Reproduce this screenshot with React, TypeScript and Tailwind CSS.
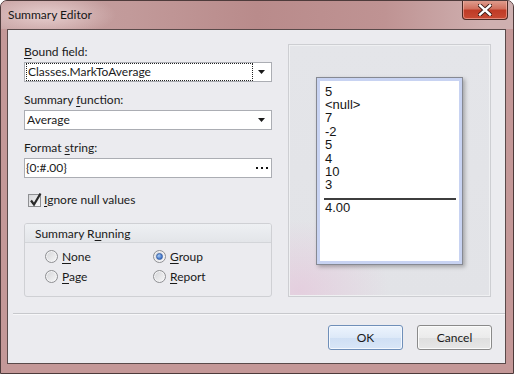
import React from "react";

const UI = "[font-family:Lato,'Open_Sans',sans-serif]";

function ComboArrow() {
  return (
    <svg width="7" height="4" viewBox="0 0 7 4" className="block">
      <path d="M0 0H7L3.5 4Z" fill="#1a1a1a" />
    </svg>
  );
}

function Radio({ checked }: { checked?: boolean }) {
  return (
    <div className="w-[13px] h-[13px] rounded-full border border-[#8e8f92] bg-[linear-gradient(135deg,#d4d5d8,#f7f7f8)] flex items-center justify-center shadow-[inset_0_0_0_1px_#f4f4f6]">
      {checked && (
        <div className="w-[7px] h-[7px] rounded-full bg-[radial-gradient(circle_at_35%_35%,#a9cbf3,#3e74c9_70%)] border border-[#3a62a8]" />
      )}
    </div>
  );
}

export default function App() {
  return (
    <div className={`w-[514px] h-[374px] bg-white ${UI}`}>
      <div className="w-[514px] h-[374px] flex flex-col rounded-t-[7px] border border-[#4e3b3b] bg-[#c49898] overflow-hidden">
        {/* title bar */}
        <div className="h-[28px] flex items-start shrink-0 bg-[radial-gradient(ellipse_70px_22px_at_45px_14px,rgba(236,214,214,0.85),transparent),linear-gradient(90deg,#c7a2a2_0%,#c29a9a_25%,#b98b8b_50%,#bf9393_75%,#cfb0b0_95%)]">
          <div className="pl-[7px] pt-[6px] text-[12px] leading-[16px] text-[#161616]">Summary Editor</div>
          <div className="ml-auto mr-[5px] -mt-[1px] w-[46px] h-[20px] rounded-b-[4px] border border-[#4b2a24] border-t-0 bg-[linear-gradient(180deg,#e0a293_0%,#d0715f_45%,#bf3b26_55%,#c84a33_100%)] shadow-[inset_0_0_0_1px_rgba(255,200,190,0.5)] flex items-center justify-center">
            <svg width="14" height="12" viewBox="0 0 14 12">
              <path d="M2 1.5L12 10.5M12 1.5L2 10.5" stroke="#3a1a14" strokeWidth="4.2" strokeLinecap="square" />
              <path d="M2 1.5L12 10.5M12 1.5L2 10.5" stroke="#ffffff" strokeWidth="2.4" strokeLinecap="square" />
            </svg>
          </div>
        </div>

        {/* client */}
        <div className="flex-1 pl-[6px] pr-[7px] pb-[9px] flex flex-col">
          <div className="flex-1 border border-[#5a4a4a] bg-[#ebebef] flex flex-col">
            <div className="flex pt-[14px] pl-[16px] pr-[14px] gap-[16px]">
              {/* left column */}
              <div className="w-[248px] flex flex-col text-[12px] text-[#1a1a1a]">
                <div className="h-[15px] leading-[15px] mb-[3px]">
                  <u className="underline-offset-2">B</u>ound field:
                </div>
                <div className="h-[20px] border border-[#abadb3] bg-white flex items-center">
                  <div className="ml-[1px] h-[18px] w-[229px] border border-dotted border-[#222] flex items-center pl-[1px] leading-[16px]">
                    Classes.MarkToAverage
                  </div>
                  <div className="ml-auto w-[17px] flex justify-center mr-[1px]">
                    <ComboArrow />
                  </div>
                </div>
                <div className="h-[15px] leading-[15px] mt-[10px] mb-[3px]">
                  Summary <u className="underline-offset-2">f</u>unction:
                </div>
                <div className="h-[20px] border border-[#abadb3] bg-white flex items-center">
                  <div className="pl-[2px] leading-[16px]">Average</div>
                  <div className="ml-auto w-[17px] flex justify-center mr-[1px]">
                    <ComboArrow />
                  </div>
                </div>
                <div className="h-[15px] leading-[15px] mt-[10px] mb-[3px]">
                  Format <u className="underline-offset-2">s</u>tring:
                </div>
                <div className="h-[20px] border border-[#abadb3] bg-white flex items-center">
                  <div className="pl-[1px] leading-[16px]">{"{0:#.00}"}</div>
                  <div className="ml-auto mr-[3px] w-[12px] flex justify-between items-center">
                    <span className="w-[2px] h-[2px] bg-[#111]" />
                    <span className="w-[2px] h-[2px] bg-[#111]" />
                    <span className="w-[2px] h-[2px] bg-[#111]" />
                  </div>
                </div>
                {/* checkbox */}
                <div className="mt-[14px] h-[16px] flex items-center pl-[4px]">
                  <div className="relative w-[13px] h-[13px] border border-[#8e8f92] bg-[linear-gradient(135deg,#d6d7da,#f8f8f9)]">
                    <svg className="absolute -left-[1px] -top-[3px]" width="15" height="15" viewBox="0 0 15 15">
                      <path d="M3 8.5L6 12.5L12.5 1.5" fill="none" stroke="#2a2a2a" strokeWidth="2.2" />
                    </svg>
                  </div>
                  <div className="ml-[3px] leading-[16px]">
                    <u className="underline-offset-2">I</u>gnore null values
                  </div>
                </div>
                {/* group */}
                <div className="mt-[15px] h-[74px] rounded-[3px] border border-[#cfd0d4] flex flex-col overflow-hidden">
                  <div className="h-[19px] bg-[linear-gradient(180deg,#eef0f3,#e3e5e9)] border-b border-[#d3d5d9] pl-[10px] flex items-center leading-[15px]">
                    Summary R<u className="underline-offset-2">u</u>nning
                  </div>
                  <div className="grid grid-cols-[108px_1fr] gap-y-[7px] pl-[20px] pt-[7px]">
                    <div className="flex items-center gap-[4px] h-[13px]">
                      <Radio />
                      <span className="leading-[15px]"><u className="underline-offset-2">N</u>one</span>
                    </div>
                    <div className="flex items-center gap-[4px] h-[13px]">
                      <Radio checked />
                      <span className="leading-[15px]"><u className="underline-offset-2">G</u>roup</span>
                    </div>
                    <div className="flex items-center gap-[4px] h-[13px]">
                      <Radio />
                      <span className="leading-[15px]"><u className="underline-offset-2">P</u>age</span>
                    </div>
                    <div className="flex items-center gap-[4px] h-[13px]">
                      <Radio />
                      <span className="leading-[15px]"><u className="underline-offset-2">R</u>eport</span>
                    </div>
                  </div>
                </div>
              </div>

              {/* preview panel */}
              <div className="w-[203px] h-[253px] border border-[#cdced2] bg-[radial-gradient(ellipse_90px_70px_at_10px_245px,rgba(230,190,215,0.55),transparent),linear-gradient(180deg,#e4e5e9,#e2e3e7)] shadow-[inset_0_0_0_1px_#eff0f2] flex items-center justify-center">
                <div className="w-[147px] h-[188px] border border-[#868992] bg-[#c8d3f2] p-[3px] shadow-[2px_2px_4px_rgba(0,0,0,0.28)]">
                  <div className="w-full h-full bg-white pt-[4px] pl-[5px] pr-[3px] [font-family:'Liberation_Sans',Arial,sans-serif] text-[13px] leading-[13.4px] text-[#151515]">
                    <div>5</div>
                    <div>&lt;null&gt;</div>
                    <div>7</div>
                    <div>-2</div>
                    <div>5</div>
                    <div>4</div>
                    <div>10</div>
                    <div>3</div>
                    <div className="-ml-[1px] mt-[6px] h-[2px] bg-[#3e3e3e]" />
                    <div className="mt-[1px]">4.00</div>
                  </div>
                </div>
              </div>
            </div>

            {/* separator */}
            <div className="mt-[16px] ml-[5px] h-[1px] bg-[#c7c8cc]" />
            <div className="ml-[5px] h-[1px] bg-[#f7f7f9]" />

            {/* buttons */}
            <div className="mt-[10px] flex justify-end gap-[14px] pr-[13px] text-[12px] text-[#1a1a1a]">
              <div className="w-[75px] h-[25px] rounded-[3px] border border-[#6f8fb9] bg-[linear-gradient(180deg,#edf4fd_0%,#dde9f8_50%,#cfdff4_51%,#d9e6f7_100%)] shadow-[inset_0_0_0_1px_#f4f8fe] flex items-center justify-center">
                OK
              </div>
              <div className="w-[75px] h-[25px] rounded-[3px] border border-[#8a8a8a] bg-[linear-gradient(180deg,#f3f3f3_0%,#ebebeb_50%,#dedede_51%,#e7e7e7_100%)] shadow-[inset_0_0_0_1px_#fbfbfb] flex items-center justify-center">
                Cancel
              </div>
            </div>
          </div>
        </div>
      </div>
    </div>
  );
}
